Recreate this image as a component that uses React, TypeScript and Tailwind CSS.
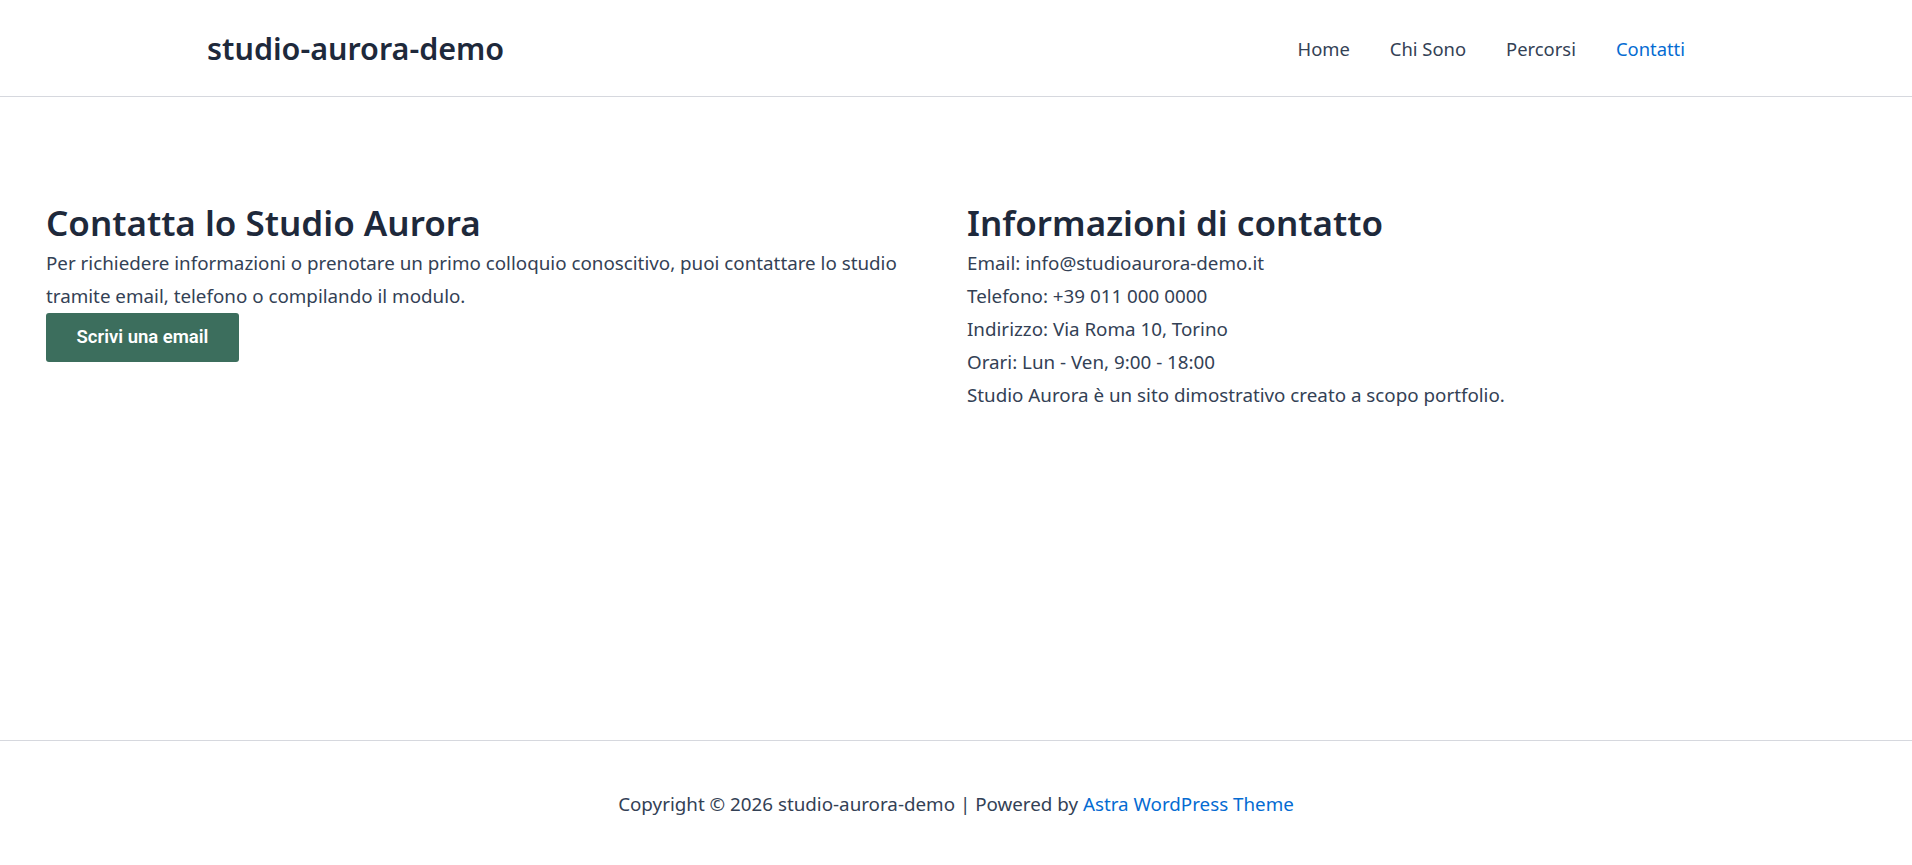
import React from "react";

const navItems = [
  { label: "Home", active: false },
  { label: "Chi Sono", active: false },
  { label: "Percorsi", active: false },
  { label: "Contatti", active: true },
];

const contactInfo = [
  "Email: info@studioaurora-demo.it",
  "Telefono: +39 011 000 0000",
  "Indirizzo: Via Roma 10, Torino",
  "Orari: Lun - Ven, 9:00 - 18:00",
  "Studio Aurora è un sito dimostrativo creato a scopo portfolio.",
];

export default function App() {
  return (
    <div className="flex min-h-screen flex-col bg-white font-['Noto_Sans',sans-serif] text-[#334155]">
      {/* Header */}
      <header className="flex h-[97px] items-center justify-between border-b border-[#d6d8de] pl-[207px] pr-[227px]">
        <a className="pt-[2px] text-[30.5px] font-semibold text-[#1e293b]">studio-aurora-demo</a>
        <nav className="flex items-center gap-[40px] pt-[2px] text-[18.4px]">
          {navItems.map((item) => (
            <a
              key={item.label}
              className={item.active ? "text-[#046bd2]" : "text-[#334155]"}
            >
              {item.label}
            </a>
          ))}
        </nav>
      </header>

      {/* Content */}
      <main className="flex-1">
        <div className="grid grid-cols-[899px_1fr] gap-[22px] px-[46px] pt-[105px]">
          <section>
            <h2 className="pb-[3px] text-[35px] font-semibold leading-[1.2] text-[#1e293b]">
              Contatta lo Studio Aurora
            </h2>
            <p className="text-[18.8px] leading-[33px]">
              Per richiedere informazioni o prenotare un primo colloquio conoscitivo, puoi contattare lo studio
              <br />
              tramite email, telefono o compilando il modulo.
            </p>
            <button className="h-[49px] w-[193px] rounded-[3px] bg-[#3c6e5d] font-['Roboto',sans-serif] text-[18.5px] font-semibold text-white">
              Scrivi una email
            </button>
          </section>
          <section>
            <h2 className="pb-[3px] text-[35px] font-semibold leading-[1.2] text-[#1e293b]">
              Informazioni di contatto
            </h2>
            {contactInfo.map((line) => (
              <p key={line} className="text-[18.8px] leading-[33px]">
                {line}
              </p>
            ))}
          </section>
        </div>
      </main>

      {/* Footer */}
      <footer className="flex h-[125px] items-center justify-center border-t border-[#d6d8de] pt-[2px] text-[18.8px]">
        <p>
          Copyright © 2026 studio-aurora-demo | Powered by{" "}
          <a className="text-[#046bd2]">Astra WordPress Theme</a>
        </p>
      </footer>
    </div>
  );
}
